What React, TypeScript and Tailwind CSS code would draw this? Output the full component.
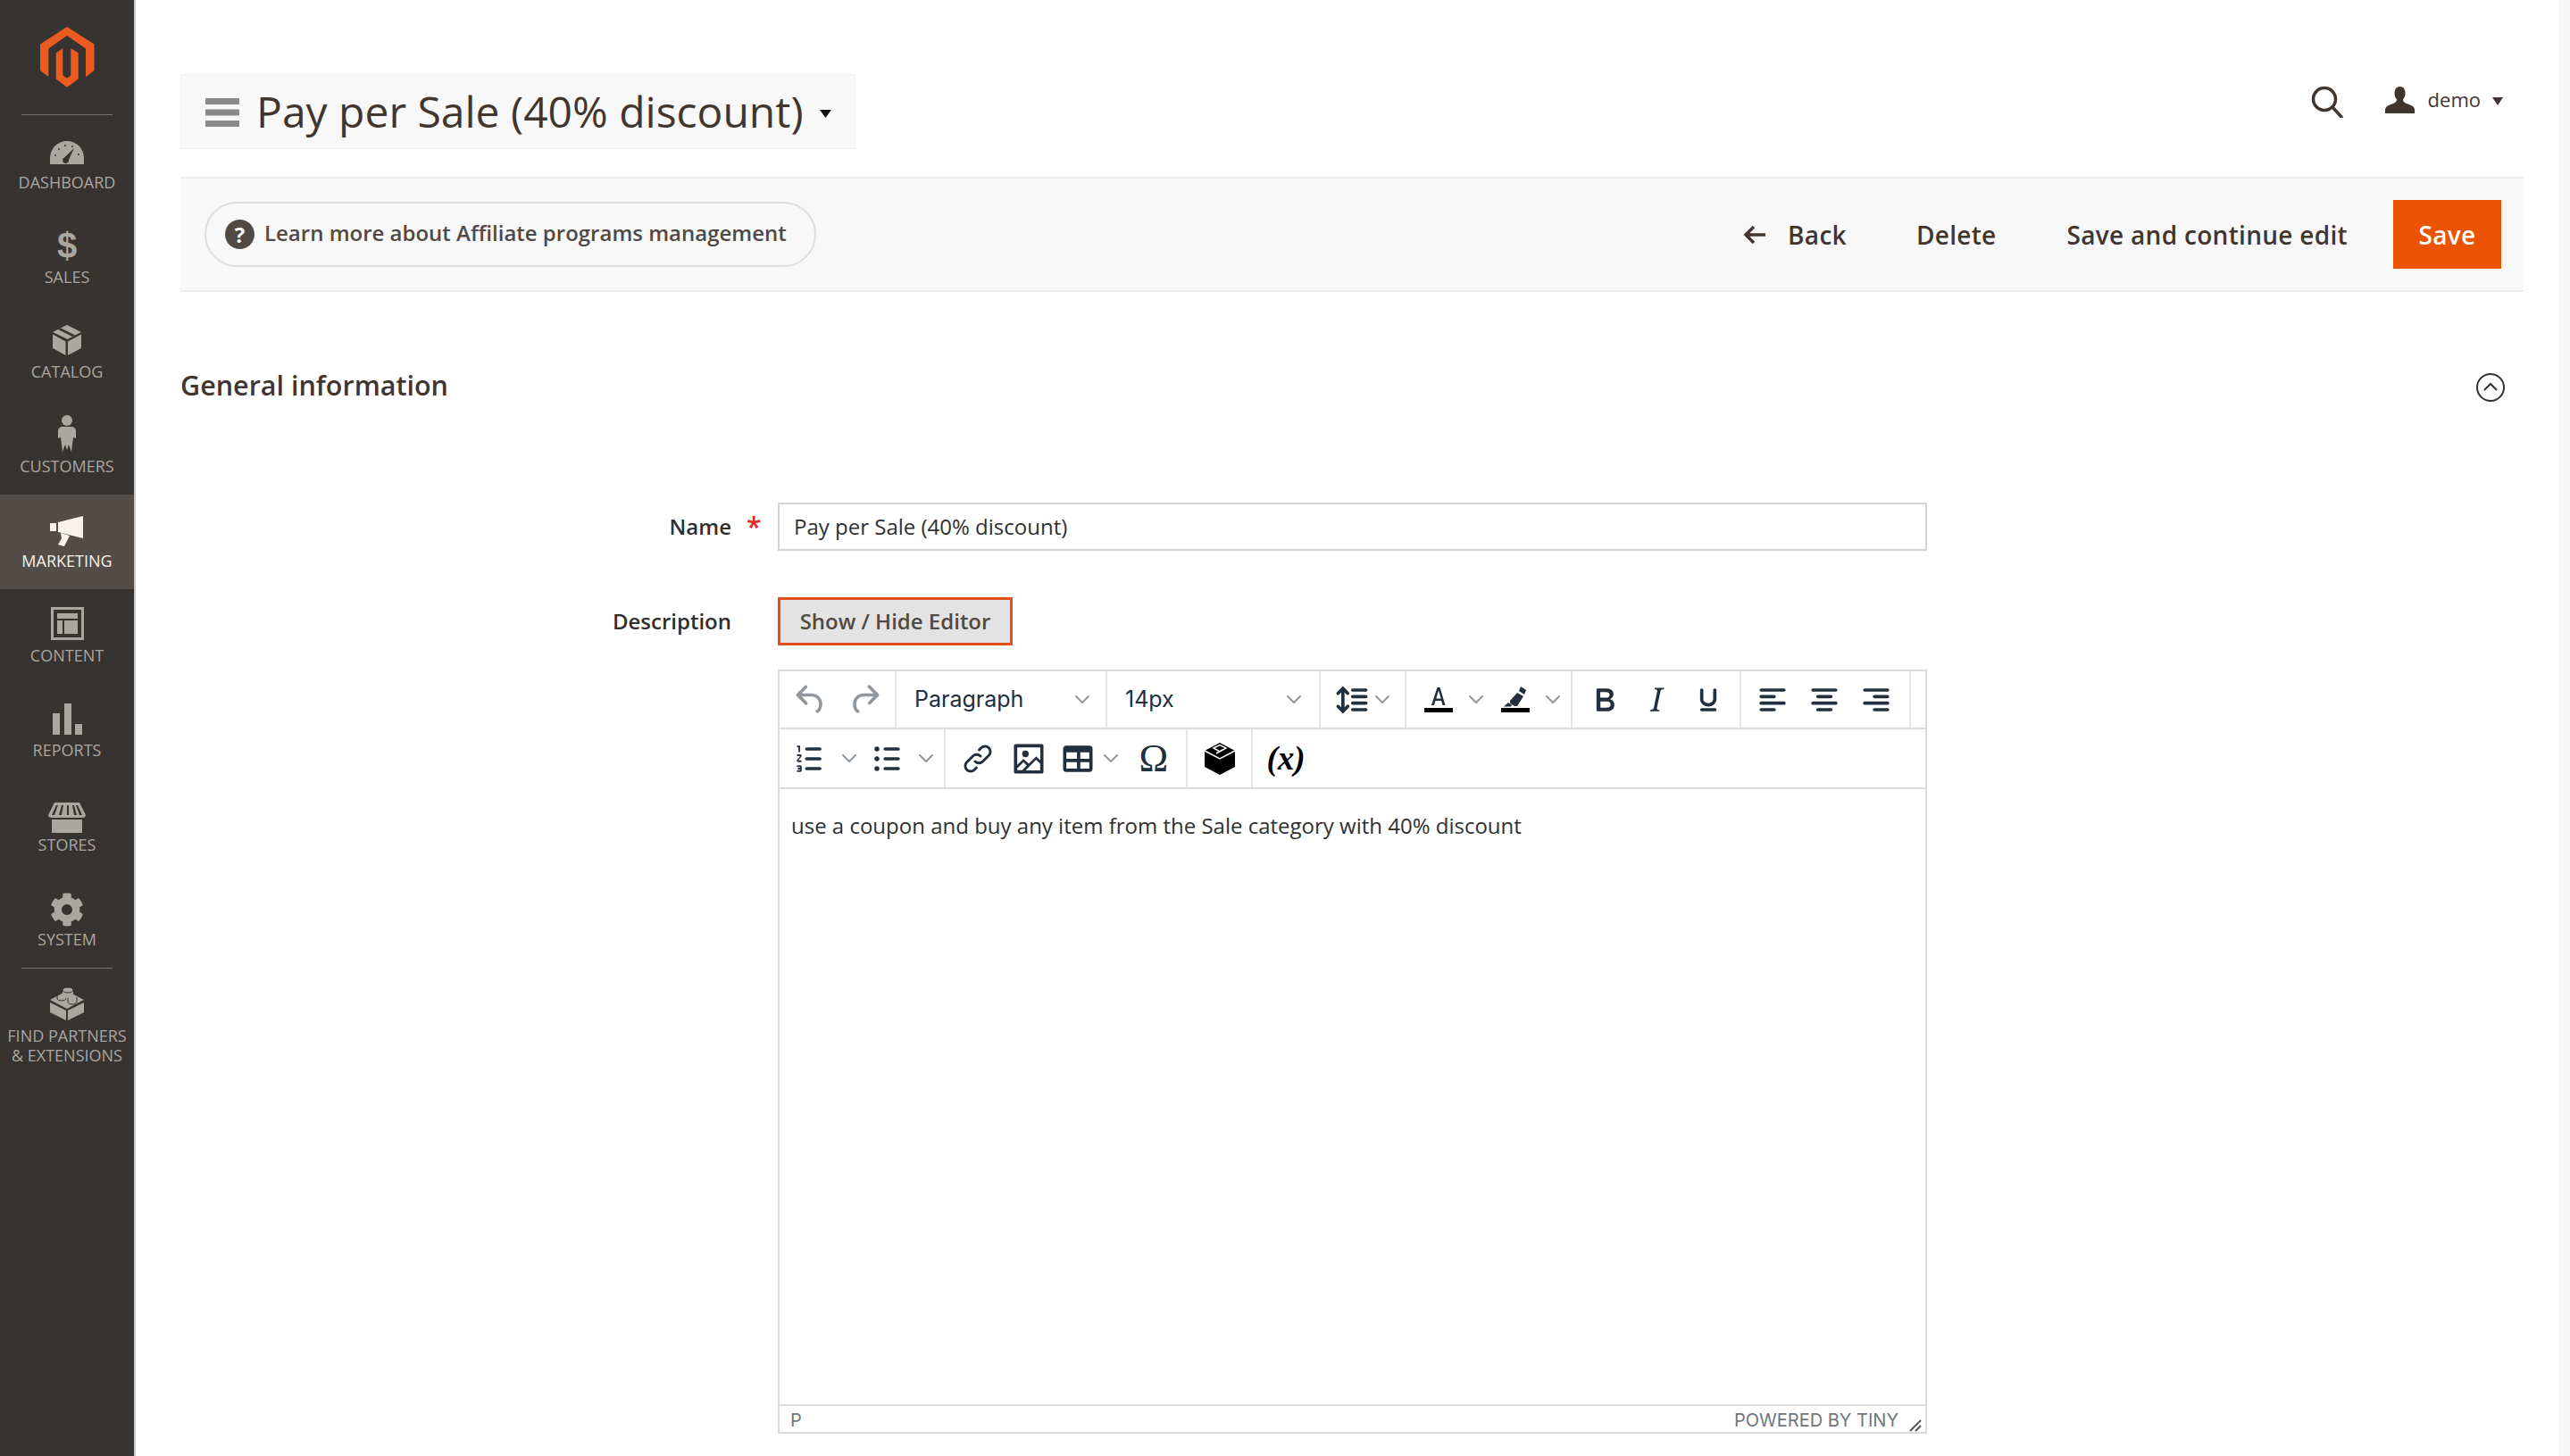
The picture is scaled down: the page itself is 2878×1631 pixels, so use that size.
import type { ReactNode } from "react";
import { FaCog } from "react-icons/fa";

const ink = "#222f3e";

function DashIcon() {
  return (
    <svg width="38" height="26" viewBox="0 0 38 26">
      <path d="M0 26V19A19 19 0 0 1 38 19V26Z" fill="currentColor" />
      <g fill="#373330">
        <circle cx="6" cy="16" r="1" />
        <circle cx="10" cy="9" r="1" />
        <circle cx="17" cy="5" r="1" />
        <circle cx="25" cy="6" r="1" />
        <circle cx="32" cy="15" r="1" />
        <path d="M27 8l-6 13a3.400 3.400 0 1 1-5-2.400z" />
      </g>
    </svg>
  );
}

function CatalogIcon() {
  return (
    <svg width="32" height="34" viewBox="0 0 32 34" fill="currentColor">
      <path d="M16 0l16 8-15.500 8L0 8z" />
      <path d="M6 5l16 8 3-1.500L9 3.500z" fill="#373330" />
      <path d="M0 10.500l14.500 8V34L0 26zM32 10.500l-15 8V34l15-8z" />
    </svg>
  );
}

function CustomerIcon() {
  return (
    <svg width="20" height="41" viewBox="0 0 20 41" fill="currentColor">
      <circle cx="10" cy="6" r="6" />
      <path d="M5 13h10c3 0 5 2 5 5v8l-3-1-2 16-3-8-2 6-2-6-3 8-2-16-3 1v-8c0-3 2-5 5-5z" />
    </svg>
  );
}

function MarketingIcon() {
  return (
    <svg width="38" height="34" viewBox="0 0 38 34" fill="currentColor">
      <path d="M0 8h7v9H0zM9 7l28-7v25L9 18zM12 19l10 3-6 12-7-2 4-7z" />
    </svg>
  );
}

function ContentIcon() {
  return (
    <svg width="37" height="37" viewBox="0 0 37 37" fill="currentColor">
      <path fillRule="evenodd" d="M0 0h37v37H0zM3 3v31h31V3z" />
      <path d="M7 7h23v6H7zM7 15h6v15H7zM15 15h15v15H15z" />
    </svg>
  );
}

function ReportsIcon() {
  return (
    <svg width="33" height="35" viewBox="0 0 33 35" fill="currentColor">
      <path d="M0 11h8v24H0zM13 0h8v35h-8zM25 23h8v12h-8z" />
    </svg>
  );
}

function StoresIcon() {
  return (
    <svg width="42" height="34" viewBox="0 0 42 34" fill="currentColor">
      <path fillRule="evenodd" d="M7 0h28l7 14c0 2-2 3-4 3H4c-2 0-4-1-4-3zM9 3l-5 11h3l4-11zM15 3l-3 11h3l2-11zM21 3v11h2V3zM27 3l2 11h3l-3-11zM33 3l5 11h-3l-4-11z" />
      <path d="M4 19h34v15H4z" />
    </svg>
  );
}

function LegoIcon() {
  return (
    <svg width="38" height="39" viewBox="0 0 38 39" fill="currentColor">
      <path d="M0 16l19-10 19 10-19 10z" />
      <path d="M0 19l18 9v11L0 30zM38 19l-18 9v11l18-9z" />
      <path d="M14 5h12v5c0 2-3 3-6 3s-6-1-6-3z" />
      <ellipse cx="20" cy="5" rx="6" ry="3" stroke="#373330" strokeWidth="1" />
      <path d="M8 9v5c0 2 2.500 3 5 3s5-1 5-3M20 14v4c0 2 2.500 3 5 3s5-1 5-3v-5" fill="none" stroke="#373330" strokeWidth="1" />
    </svg>
  );
}

const navItems: { label: string; icon: ReactNode; active?: boolean }[] = [
  { label: "Dashboard", icon: <DashIcon /> },
  { label: "Sales", icon: <span className="font-['Liberation_Sans',sans-serif] font-bold text-[40px] leading-none -mt-[4px]">$</span> },
  { label: "Catalog", icon: <div className="-mt-[4px]"><CatalogIcon /></div> },
  { label: "Customers", icon: <div className="-mt-[7px]"><CustomerIcon /></div> },
  { label: "Marketing", icon: <MarketingIcon />, active: true },
  { label: "Content", icon: <div className="-mt-[5px]"><ContentIcon /></div> },
  { label: "Reports", icon: <div className="-mt-[4px]"><ReportsIcon /></div> },
  { label: "Stores", icon: <div className="mt-[5px]"><StoresIcon /></div> },
  { label: "System", icon: <FaCog size={38} /> },
];

function NavItem({ label, icon, active }: { label: string; icon: ReactNode; active?: boolean }) {
  return (
    <div className={active ? "h-[106px] flex flex-col items-center pt-[16px] bg-[#524d49] text-[#f7f3eb]" : "h-[106px] flex flex-col items-center pt-[16px] text-[#aaa6a0]"}>
      <div className="h-[50px] flex items-center justify-center">{icon}</div>
      <div className="text-[18px] leading-[16px] uppercase">{label}</div>
    </div>
  );
}

function Sidebar() {
  return (
    <aside className="w-[150px] shrink-0 bg-[#373330] flex flex-col border-r-2 border-[#c9c7c5] box-content">
      <div className="h-[128px] flex justify-center items-start pt-[30px]">
        <svg width="61" height="68" viewBox="0 0 61 58" preserveAspectRatio="none" fill="#eb5a1e">
          <path d="M30 0L60.500 16.700V41.700L51 47.700V21L30 8.300 9.300 21V47.700L0 41.700V16.700z" />
          <path d="M17.700 25L25.300 20.700V46.500L30 49 34.300 46.500V20.700L42.700 25V50L30 57.700 17.700 50z" />
        </svg>
      </div>
      <div className="h-px mx-[24px] bg-[#7a7572] mb-px" />
      {navItems.map((item) => (
        <NavItem key={item.label} {...item} />
      ))}
      <div className="h-px mx-[24px] bg-[#7a7572] mb-px" />
      <div className="flex flex-col items-center pt-[14px] text-[#aaa6a0]">
        <div className="h-[46px] flex items-center justify-center">
          <LegoIcon />
        </div>
        <div className="text-[18px] leading-[22px] uppercase text-center mt-[3px]">
          Find Partners
          <br />& Extensions
        </div>
      </div>
    </aside>
  );
}

function Chevron({ w }: { w: string }) {
  return (
    <div className={`${w} flex items-center justify-center`}>
      <svg width="20" height="12" viewBox="0 0 20 12" fill="none" stroke={ink} strokeOpacity="0.5" strokeWidth="2" strokeLinecap="round" strokeLinejoin="round">
        <path d="M3 2l7 7 7-7" />
      </svg>
    </div>
  );
}

function TIcon({ d, w, opacity }: { d: string; w: string; opacity?: number }) {
  return (
    <div className={`${w} flex items-center justify-center`}>
      <svg width="44" height="44" viewBox="0 0 24 24" fill={ink} fillOpacity={opacity ?? 1}>
        <path fillRule="evenodd" d={d} />
      </svg>
    </div>
  );
}

const icons = {
  undo: "M6.400 8H12c3.700 0 6.200 2 6.800 5.100.6 2.700-.4 5.600-2.300 6.800a1 1 0 0 1-1-1.800c1.100-.6 1.800-2.700 1.400-4.600-.5-2.100-2.100-3.500-4.900-3.500H6.400l3.300 3.300a1 1 0 1 1-1.400 1.400l-5-5a1 1 0 0 1 0-1.400l5-5a1 1 0 0 1 1.400 1.400L6.400 8z",
  redo: "M17.600 10H12c-2.800 0-4.400 1.400-4.900 3.500-.4 2 .3 4 1.400 4.600a1 1 0 1 1-1 1.800c-2-1.200-2.900-4.100-2.300-6.800.6-3 3-5.100 6.800-5.100h5.600l-3.300-3.300a1 1 0 1 1 1.400-1.400l5 5a1 1 0 0 1 0 1.400l-5 5a1 1 0 0 1-1.400-1.400l3.300-3.300z",
  lineHeight: "M21 5a1 1 0 0 1 .1 2H13a1 1 0 0 1-.1-2H21zm0 4a1 1 0 0 1 .1 2H13a1 1 0 0 1-.1-2H21zm0 4a1 1 0 0 1 .1 2H13a1 1 0 0 1-.1-2H21zm0 4a1 1 0 0 1 .1 2H13a1 1 0 0 1-.1-2H21zM7 3.600l3.700 3.700a1 1 0 0 1-1.300 1.500h-.1L8 7.300v9.200l1.300-1.300a1 1 0 0 1 1.300 0h.1c.4.4.4 1 0 1.300v.1L7 20.400l-3.700-3.700a1 1 0 0 1 1.300-1.500h.1L6 16.700V7.400L4.700 8.700a1 1 0 0 1-1.300 0h-.1a1 1 0 0 1 0-1.300v-.1L7 3.600z",
  bold: "M7.800 19c-.3 0-.5 0-.6-.2l-.2-.5V5.700c0-.2 0-.4.2-.5l.6-.2h5c1.500 0 2.700.3 3.500 1 .7.6 1.100 1.400 1.100 2.500a3 3 0 0 1-.6 1.900c-.4.6-1 1-1.600 1.200.4.1.9.3 1.300.6s.8.7 1 1.200c.3.4.4 1 .4 1.600 0 1.300-.4 2.300-1.300 3-.8.7-2.100 1-3.800 1H7.800zm5-8.300c.6 0 1.200-.1 1.600-.5.4-.3.6-.7.6-1.300 0-1.100-.8-1.700-2.300-1.700H9.300v3.500h3.500zm.5 6c.7 0 1.300-.1 1.700-.4.4-.4.6-.9.600-1.500s-.2-1-.7-1.400c-.4-.3-1-.4-2-.4H9.400v3.800h3.900z",
  italic: "M16.700 4.700l-.1.900h-.3c-.6 0-1 0-1.400.3-.3.3-.4.600-.5 1.100l-2.100 9.800v.6c0 .5.4.8 1.400.8h.2l-.2.8H8l.2-.8h.2c1.100 0 1.800-.5 2-1.500l2-9.800.1-.5c0-.6-.4-.8-1.400-.8h-.3l.2-.9h5.800z",
  underline: "M16 5c.6 0 1 .4 1 1v5.500a4 4 0 0 1-.4 1.800l-1 1.400a5.300 5.300 0 0 1-5.500 1 5 5 0 0 1-1.600-1c-.5-.4-.8-.9-1.100-1.400a4 4 0 0 1-.4-1.800V6c0-.6.4-1 1-1s1 .4 1 1v5.500c0 .3 0 .6.2 1l.6.7a3.300 3.300 0 0 0 2.200.8 3.400 3.400 0 0 0 2.200-.8c.3-.2.4-.5.6-.8l.2-.9V6c0-.6.4-1 1-1zM8 17h8c.6 0 1 .4 1 1s-.4 1-1 1H8a1 1 0 0 1 0-2z",
  alignLeft: "M5 5h14a1 1 0 0 1 0 2H5a1 1 0 1 1 0-2zm0 4h8a1 1 0 0 1 0 2H5a1 1 0 1 1 0-2zm0 8h8a1 1 0 0 1 0 2H5a1 1 0 0 1 0-2zm0-4h14a1 1 0 0 1 0 2H5a1 1 0 0 1 0-2z",
  alignCenter: "M5 5h14a1 1 0 0 1 0 2H5a1 1 0 1 1 0-2zm3 4h8a1 1 0 0 1 0 2H8a1 1 0 1 1 0-2zm0 8h8a1 1 0 0 1 0 2H8a1 1 0 0 1 0-2zm-3-4h14a1 1 0 0 1 0 2H5a1 1 0 0 1 0-2z",
  alignRight: "M5 5h14a1 1 0 0 1 0 2H5a1 1 0 1 1 0-2zm6 4h8a1 1 0 0 1 0 2h-8a1 1 0 0 1 0-2zm0 8h8a1 1 0 0 1 0 2h-8a1 1 0 0 1 0-2zm-6-4h14a1 1 0 0 1 0 2H5a1 1 0 0 1 0-2z",
  numList: "M10 17h8c.6 0 1 .4 1 1s-.4 1-1 1h-8a1 1 0 0 1 0-2zm0-6h8c.6 0 1 .4 1 1s-.4 1-1 1h-8a1 1 0 0 1 0-2zm0-6h8c.6 0 1 .4 1 1s-.4 1-1 1h-8a1 1 0 1 1 0-2zM6 4v3.500c0 .3-.2.5-.5.5a.5.5 0 0 1-.5-.5V5h-.5a.5.5 0 0 1 0-1H6zm-1 8.800l.2.2h1.300c.3 0 .5.2.5.5s-.2.5-.5.5H4.900a.9.9 0 0 1-.9-.9c0-.2 0-.4.2-.5l1.800-2.100-.2-.2H4.500a.5.5 0 0 1 0-1h1.600c.5 0 .9.4.9.9 0 .2 0 .4-.2.5L5 12.800zm-.5 3.200h1.600c.5 0 .9.4.9.9v2.200c0 .5-.4.9-.9.9H4.500a.5.5 0 0 1 0-1H6v-.5H5a.5.5 0 0 1 0-1h1V17H4.500a.5.5 0 0 1 0-1z",
  bulList: "M11 5h8c.6 0 1 .4 1 1s-.4 1-1 1h-8a1 1 0 0 1 0-2zm0 6h8c.6 0 1 .4 1 1s-.4 1-1 1h-8a1 1 0 0 1 0-2zm0 6h8c.6 0 1 .4 1 1s-.4 1-1 1h-8a1 1 0 0 1 0-2zM4.500 6a1.500 1.500 0 1 1 3 0 1.500 1.500 0 0 1-3 0zm0 6a1.500 1.500 0 1 1 3 0 1.500 1.500 0 0 1-3 0zm0 6a1.500 1.500 0 1 1 3 0 1.500 1.500 0 0 1-3 0z",
  image: "M5 15.700l3.300-3.200c.3-.3.7-.3 1 0L12 15l4.100-4c.3-.4.8-.4 1 0l2 1.900V5H5v10.700zM5 18v1h3l2.800-2.900-2-2L5 17.900zm14-3l-2.500-2.400-6.400 6.500H19v-4.100zM4 3h16c.6 0 1 .4 1 1v16c0 .6-.4 1-1 1H4a1 1 0 0 1-1-1V4c0-.6.4-1 1-1zm6 8a2 2 0 1 1 0-4 2 2 0 0 1 0 4z",
  table: "M19 4a2 2 0 0 1 2 2v12a2 2 0 0 1-2 2H5a2 2 0 0 1-2-2V6c0-1.100.9-2 2-2h14zM5 14v4h6.500v-4H5zm14 0h-5.500v4H19v-4zM5 12h6.500V8H5v4zm8.500 0H19V8h-5.500v4z",
};

function LinkIcon() {
  return (
    <div className="w-[58px] flex items-center justify-center">
      <svg width="36" height="36" viewBox="0 0 24 24" fill="none" stroke={ink} strokeWidth="2" strokeLinecap="round" strokeLinejoin="round">
        <path d="M10 14a4 4 0 0 0 5.700 0l4.500-4.500a4 4 0 0 0-5.700-5.700l-1.500 1.500" />
        <path d="M14 10a4 4 0 0 0-5.700 0l-4.500 4.500a4 4 0 0 0 5.700 5.700l1.500-1.500" />
      </svg>
    </div>
  );
}

function ColorIcon({ w, kind }: { w: string; kind: "fore" | "back" }) {
  return (
    <div className={`${w} flex items-center justify-center`}>
      <svg width="32" height="30" viewBox="0 0 32 30">
        {kind === "fore" ? (
          <path fill={ink} fillRule="evenodd" d="M14.500 1h3l6 20h-3l-1.500-5h-6.500l-1.500 5h-3zM13.300 13.500h5.400L16 4.500z" />
        ) : (
          <path fill={ink} d="M22 0l6 4-2 5-6-4zM18 7l7 4-7 11-3 0-5-3 0-3zM8 18l4 3-1 1.500H3z" />
        )}
        <rect x="0" y="24" width="32" height="5" fill="#000" />
      </svg>
    </div>
  );
}

function CubeIcon() {
  return (
    <div className="w-[73px] flex items-center justify-center">
      <svg width="36" height="36" viewBox="0 0 36 36">
        <path fill="#000" d="M18 0l17 9v18l-17 9-17-9V9z" />
        <path fill="none" stroke="#fff" strokeWidth="1.500" d="M1 9l17 9 17-9M11 6l7-3.500 7 3.500-7 4zM14 12l7-4" />
      </svg>
    </div>
  );
}

function ToolGroup({ className, children }: { className: string; children?: ReactNode }) {
  return <div className={`${className} h-full flex items-center shrink-0 border-r-2 border-[#e3e5e7]`}>{children}</div>;
}

function Select({ label, className, textWidth }: { label: string; className: string; textWidth: string }) {
  return (
    <ToolGroup className={className}>
      <span className={`${textWidth} pl-[20px] text-[25px]`} style={{ color: ink }}>
        {label}
      </span>
      <Chevron w="w-[24px]" />
    </ToolGroup>
  );
}

function Editor() {
  return (
    <div className="mt-[27px] ml-[669px] w-[1287px] h-[856px] border-2 border-[#d9dcde] flex flex-col font-['Inter',sans-serif]">
      <div className="h-[65px] shrink-0 flex border-b-2 border-[#d9dcde]">
        <ToolGroup className="w-[131px] pl-[5px]">
          <TIcon d={icons.undo} w="w-[60px]" opacity={0.5} />
          <TIcon d={icons.redo} w="w-[60px]" opacity={0.5} />
        </ToolGroup>
        <Select label="Paragraph" className="w-[236px]" textWidth="w-[196px]" />
        <Select label="14px" className="w-[239px]" textWidth="w-[197px]" />
        <ToolGroup className="w-[96px] pl-[12px]">
          <TIcon d={icons.lineHeight} w="w-[44px]" />
          <Chevron w="w-[26px]" />
        </ToolGroup>
        <ToolGroup className="w-[186px] pl-[14px]">
          <ColorIcon w="w-[44px]" kind="fore" />
          <Chevron w="w-[40px]" />
          <ColorIcon w="w-[48px]" kind="back" />
          <Chevron w="w-[36px]" />
        </ToolGroup>
        <ToolGroup className="w-[189px] pl-[7px]">
          <TIcon d={icons.bold} w="w-[58px]" />
          <TIcon d={icons.italic} w="w-[58px]" />
          <TIcon d={icons.underline} w="w-[58px]" />
        </ToolGroup>
        <ToolGroup className="w-[190px] pl-[6px]">
          <TIcon d={icons.alignLeft} w="w-[58px]" />
          <TIcon d={icons.alignCenter} w="w-[58px]" />
          <TIcon d={icons.alignRight} w="w-[58px]" />
        </ToolGroup>
      </div>
      <div className="h-[67px] shrink-0 flex border-b-2 border-[#d9dcde]">
        <ToolGroup className="w-[186px] pl-[4px]">
          <TIcon d={icons.numList} w="w-[60px]" />
          <Chevron w="w-[28px]" />
          <TIcon d={icons.bulList} w="w-[56px]" />
          <Chevron w="w-[32px]" />
        </ToolGroup>
        <ToolGroup className="w-[271px] pl-[7px]">
          <LinkIcon />
          <TIcon d={icons.image} w="w-[58px]" />
          <TIcon d={icons.table} w="w-[52px]" />
          <Chevron w="w-[23px]" />
          <div className="w-[73px] text-center font-['Liberation_Serif',serif] text-[44px] leading-none" style={{ color: ink }}>
            Ω
          </div>
        </ToolGroup>
        <ToolGroup className="w-[73px]">
          <CubeIcon />
        </ToolGroup>
        <div className="w-[74px] text-center font-['Liberation_Serif',serif] font-bold italic text-[37px] self-center text-black">(x)</div>
      </div>
      <div className="flex-1 pl-[13px] pt-[23px] font-['Open_Sans',sans-serif] text-[24px] leading-[36px] text-[#303030]">
        use a coupon and buy any item from the Sale category with 40% discount
      </div>
      <div className="h-[31px] shrink-0 border-t-2 border-[#d9dcde] flex items-center pl-[12px] pr-[4px] pt-[3px] text-[20px] text-[#6f7680]">
        <span className="flex-1">P</span>
        <span>POWERED BY TINY</span>
        <svg className="ml-[12px] self-end" width="14" height="14" viewBox="0 0 14 14" stroke="#555" strokeWidth="2">
          <path d="M1 13L13 1M7 13l6-6" />
        </svg>
      </div>
    </div>
  );
}

export default function App() {
  return (
    <div className="flex w-full h-[1631px] overflow-hidden bg-white font-['Open_Sans',sans-serif] text-[#41362f]">
      <Sidebar />
      <main className="flex-1 flex flex-col pl-[50px] pr-[40px]">
        <div className="pt-[83px] flex justify-between items-start">
          <div className="w-[756px] h-[84px] bg-[#f8f8f8] border border-[#f1f1f1] flex items-center pl-[28px]">
            <svg className="mt-[2px] shrink-0 -ml-[1px]" width="38" height="32" viewBox="0 0 38 32" fill="#8a8a8a">
              <path d="M0 0h38v7H0zM0 12.500h38v7H0zM0 25h38v7H0z" />
            </svg>
            <span className="ml-[19px] text-[48px] leading-none whitespace-nowrap text-[#41362f]">Pay per Sale (40% discount)</span>
            <svg className="ml-[18px] mt-[4px] shrink-0" width="13" height="9" viewBox="0 0 13 9" fill="#111">
              <path d="M0 0h13L6.500 9z" />
            </svg>
          </div>
          <div className="mt-[13px] pr-[23px] flex items-center">
            <svg width="36" height="36" viewBox="0 0 36 36" fill="none" stroke="#41362f" strokeWidth="3.500" strokeLinecap="round">
              <circle cx="15" cy="15" r="12.500" />
              <path d="M24 24l10 11" />
            </svg>
            <svg className="ml-[47px] -mt-[4px]" width="33" height="30" viewBox="0 0 33 30" fill="#41362f">
              <path d="M16.500 0c4 0 6 3 6 7.500 0 3-1.200 5.500-2.500 7 .2 2 1 3 3 4 4 1.800 10 3 10 7.500V30H0v-4c0-4.500 6-5.700 10-7.500 2-1 2.800-2 3-4-1.300-1.500-2.500-4-2.500-7C10.500 3 12.500 0 16.500 0z" />
            </svg>
            <span className="ml-[15px] -mt-[6px] text-[22px] leading-none">demo</span>
            <svg className="ml-[13px] -mt-[2px]" width="12" height="9" viewBox="0 0 12 9" fill="#41362f">
              <path d="M0 0h12L6 9z" />
            </svg>
          </div>
        </div>

        <div className="mt-[31px] h-[129px] bg-[#f8f8f8] border-t-2 border-b-2 border-[#ececec] flex items-center justify-between pl-[27px] pr-[25px]">
          <div className="w-[685px] h-[73px] rounded-full border-2 border-[#dedede] flex items-center pl-[21px]">
            <span className="w-[33px] h-[33px] rounded-full bg-[#514943] text-white font-bold text-[24px] flex items-center justify-center">?</span>
            <span className="ml-[11px] -mt-[3px] text-[24px] font-semibold whitespace-nowrap text-[#514943]">Learn more about Affiliate programs management</span>
          </div>
          <div className="flex items-center text-[28px] font-semibold tracking-[0.3px] text-[#41362f]">
            <svg width="26" height="24" viewBox="0 0 26 24" fill="none" stroke="#41362f" strokeWidth="3.500">
              <path d="M25 12H3M12 3l-9 9 9 9" />
            </svg>
            <span className="ml-[24px]">Back</span>
            <span className="ml-[78px]">Delete</span>
            <span className="ml-[79px]">Save and continue edit</span>
            <span className="ml-[51px] w-[121px] h-[77px] bg-[#eb5202] text-white flex items-center justify-center">Save</span>
          </div>
        </div>

        <div className="mt-[86px] h-[38px] flex items-center justify-between pr-[21px]">
          <h2 className="text-[30.500px] font-semibold text-[#41362f]">General information</h2>
          <svg className="mt-[3px]" width="32" height="32" viewBox="0 0 32 32" fill="none" stroke="#303030" strokeWidth="2">
            <circle cx="16" cy="16" r="15" />
            <path d="M9 19l7-7 7 7" />
          </svg>
        </div>

        <div className="mt-[112px] flex items-center">
          <label className="w-[617px] text-right text-[24px] font-semibold text-[#303030]">Name</label>
          <span className="w-[52px] pl-[17px] text-[30px] leading-none font-semibold text-[#e22626]">*</span>
          <div className="w-[1287px] h-[54px] border-2 border-[#d4d4d4] flex items-center pl-[16px] text-[24px] text-[#303030]">Pay per Sale (40% discount)</div>
        </div>

        <div className="mt-[52px] flex items-center">
          <label className="w-[617px] text-right text-[24px] font-semibold text-[#303030]">Description</label>
          <span className="w-[52px]" />
          <div className="w-[263px] h-[54px] bg-[#e3e3e3] border-[3px] border-[#e04f1e] flex items-center justify-center text-[24px] font-semibold text-[#514943]">Show / Hide Editor</div>
        </div>

        <Editor />
      </main>
      <div className="w-[12px] shrink-0 bg-[#f6f6f6]" />
    </div>
  );
}
